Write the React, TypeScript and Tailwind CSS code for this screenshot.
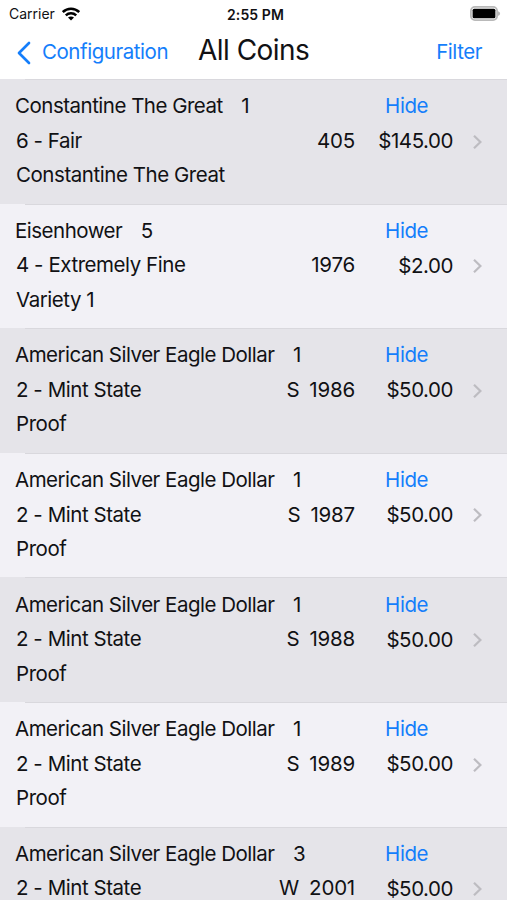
type Coin = {
	name: string;
	count: number;
	grade: string;
	mint?: string;
	year: string;
	value: string;
	variety: string;
};

const eagle = { name: "American Silver Eagle Dollar", grade: "2 - Mint State", value: "$50.00", variety: "Proof" };

const coins: Coin[] = [
	{ name: "Constantine The Great", count: 1, grade: "6 - Fair", year: "405", value: "$145.00", variety: "Constantine The Great" },
	{ name: "Eisenhower", count: 5, grade: "4 - Extremely Fine", year: "1976", value: "$2.00", variety: "Variety 1" },
	{ ...eagle, count: 1, mint: "S", year: "1986" },
	{ ...eagle, count: 1, mint: "S", year: "1987" },
	{ ...eagle, count: 1, mint: "S", year: "1988" },
	{ ...eagle, count: 1, mint: "S", year: "1989" },
	{ ...eagle, count: 3, mint: "W", year: "2001" },
];

function StatusBar() {
	return (
		<div className="flex h-[26px] items-center pl-[9px] pr-[6px] pt-px text-[14px] tracking-normal">
			<div className="flex flex-1 items-center gap-[7px]">
				<span>Carrier</span>
				<svg width="18" height="14" viewBox="0 0 18 14" fill="none" stroke="black" strokeWidth="2.5">
					<path d="M0.8 5C5.4 0.7 12.6 0.7 17.2 5" />
					<path d="M3.8 8.3C6.7 5.6 11.3 5.6 14.2 8.3" />
					<path d="M6 10.5L9 13.4L12 10.5C10.3 9 7.7 9 6 10.5Z" fill="black" stroke="none" />
				</svg>
			</div>
			<span className="pl-px pt-px text-[14px] font-semibold tracking-[0.1px]">2:55 PM</span>
			<div className="flex flex-1 justify-end">
				<svg width="31" height="15" viewBox="0 0 31 15">
					<rect x="0.9" y="0.9" width="26.2" height="13.2" rx="4" fill="white" stroke="#b9b9b9" strokeWidth="1.8" />
					<rect x="2.6" y="2.8" width="22.8" height="9.4" rx="1.5" />
					<path d="M28 5.2C30.8 6 30.8 9 28 9.8Z" fill="#b9b9b9" />
				</svg>
			</div>
		</div>
	);
}

function NavBar() {
	return (
		<header className="flex h-[52px] items-center pl-[17px] pr-[25px] pt-px">
			<button className="flex items-center gap-[11px] text-[#147efb]">
				<svg width="14" height="24" viewBox="0 0 14 24" fill="none" stroke="currentColor" strokeWidth="2.7" strokeLinecap="round" strokeLinejoin="round">
					<path d="M12 2L2 12L12 22" />
				</svg>
				Configuration
			</button>
			<h1 className="ml-[30px] pb-[6px] text-[28px] tracking-[-0.55px]">All Coins</h1>
			<button className="ml-auto text-[#147efb]">Filter</button>
		</header>
	);
}

function CoinRow({ coin }: { coin: Coin }) {
	return (
		<li className="flex h-[124.6px] flex-col pl-[15px] odd:bg-[#e5e4e9] even:bg-[#f2f1f6]">
			<div className="ml-[10px] h-px shrink-0 bg-[#d9d8dd]" />
			<div className="mt-[9.4px] flex h-[34.5px] shrink-0 items-center whitespace-nowrap">
				<span className="tracking-[-0.5px]">{coin.name}</span>
				<span className="ml-[18.5px] flex-1">{coin.count}</span>
				<button className="mr-[79px] text-[#147efb]">Hide</button>
			</div>
			<div className="flex h-[34.5px] shrink-0 items-center pl-px">
				<span>{coin.grade}</span>
				<div className="ml-auto flex gap-[10px] tracking-[-0.2px]">
					{coin.mint && <span>{coin.mint}</span>}
					<span>{coin.year}</span>
				</div>
				<span className="w-[98px] pt-px text-right">{coin.value}</span>
				<svg className="ml-[20px] mr-[25px] mt-px" width="9" height="14" viewBox="0 0 9 14" fill="none" stroke="#bdbcc1" strokeWidth="2.2">
					<path d="M1 0.8L7.4 7L1 13.2" />
				</svg>
			</div>
			<div className="flex h-[34.5px] shrink-0 items-center pl-px">{coin.variety}</div>
		</li>
	);
}

export default function App() {
	return (
		<div className="h-[900px] overflow-hidden bg-white font-[Inter,sans-serif] text-[20.5px] tracking-[-0.45px] text-[#111114]">
			<StatusBar />
			<NavBar />
			<ul className="pt-px">
				{coins.map((coin) => (
					<CoinRow key={coin.year} coin={coin} />
				))}
			</ul>
		</div>
	);
}
